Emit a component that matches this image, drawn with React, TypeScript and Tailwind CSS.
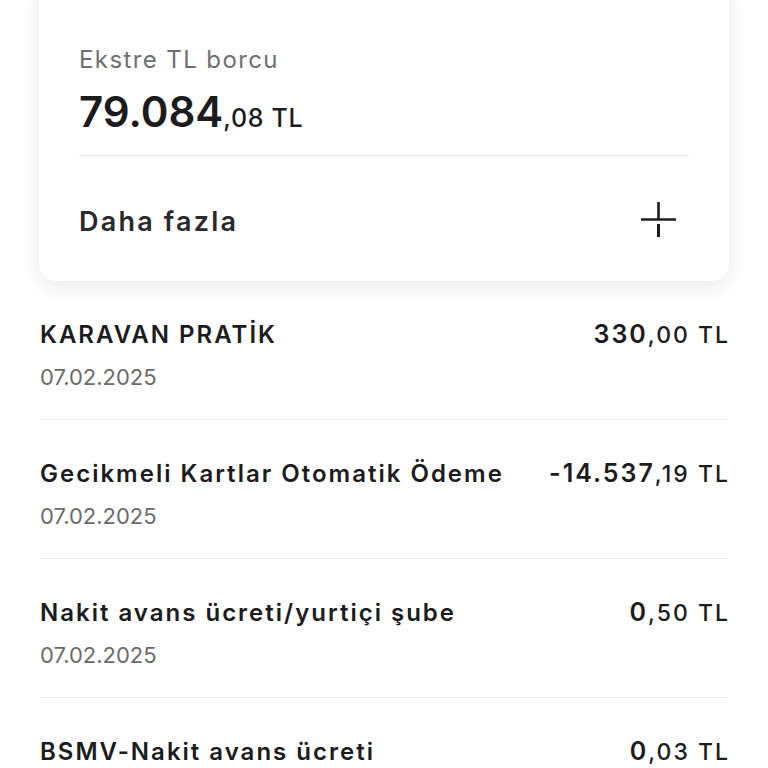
import React from "react";

type Row = { title: string; date: string; int: string; dec: string };

const rows: Row[] = [
  { title: "KARAVAN PRATİK", date: "07.02.2025", int: "330", dec: ",00 TL" },
  { title: "Gecikmeli Kartlar Otomatik Ödeme", date: "07.02.2025", int: "-14.537", dec: ",19 TL" },
  { title: "Nakit avans ücreti/yurtiçi şube", date: "07.02.2025", int: "0", dec: ",50 TL" },
  { title: "BSMV-Nakit avans ücreti", date: "07.02.2025", int: "0", dec: ",03 TL" },
];

function PlusIcon() {
  return (
    <svg width="36" height="36" viewBox="0 0 36 36" fill="none">
      <path d="M0 17.5H35" stroke="#1c1c1e" strokeWidth="2.6" />
      <path d="M17.5 0V17" stroke="#1c1c1e" strokeWidth="2.6" />
      <path d="M17.5 22V35" stroke="#1c1c1e" strokeWidth="3" />
    </svg>
  );
}

export default function App() {
  return (
    <div
      className="w-[768px] h-[768px] overflow-hidden bg-white text-[#1c1c1e]"
      style={{ fontFamily: "Inter, 'Noto Sans', sans-serif" }}
    >
      <div className="mx-[39px] -mt-[20px] rounded-[18px] bg-white px-[40px] pt-[60px] shadow-[0_6px_22px_rgba(0,0,0,0.09)]">
        <div className="text-[24px] leading-[40px] text-[#6e6e73] tracking-[1.4px]">Ekstre TL borcu</div>
        <div className="mt-[8px] flex items-baseline leading-[48px]">
          <span className="text-[42px] font-semibold tracking-[0px]">79.084</span>
          <span className="text-[25px] font-medium tracking-[0.7px]">,08 TL</span>
        </div>
        <div className="mt-[13px] h-px bg-[#e8e8ea]" />
        <div className="flex h-[125px] items-center justify-between">
          <span className="mt-[7px] text-[27px] font-semibold tracking-[2.2px] text-[#2a2a2c]">Daha fazla</span>
          <span className="mr-[12px] mt-[2px]"><PlusIcon /></span>
        </div>
      </div>

      <div className="mx-[40px]">
        {rows.map((r, i) => (
          <div key={i} className="border-b border-[#ececee] pt-[37px] pb-[27px]">
            <div className="flex items-baseline justify-between leading-[32px]">
              <span className="text-[24px] font-semibold tracking-[2px] text-[#1c1c1e]">{r.title}</span>
              <span className="flex items-baseline tracking-[2px] -mr-[2px]">
                <span className="text-[25px] font-semibold">{r.int}</span>
                <span className="text-[23px] font-medium">{r.dec}</span>
              </span>
            </div>
            <div className="mt-[11px] text-[22px] leading-[30px] text-[#6b6b6b]">{r.date}</div>
          </div>
        ))}
      </div>
    </div>
  );
}
